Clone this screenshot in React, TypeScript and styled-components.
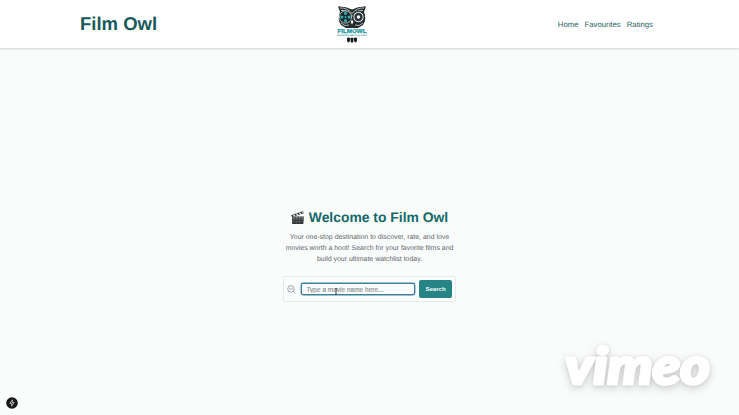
import React from 'react';
import styled, { createGlobalStyle } from 'styled-components';

const GlobalStyle = createGlobalStyle`
  * { box-sizing: border-box; }
  body { margin: 0; background: #fafbfb; font-family: "Liberation Sans", Arial, sans-serif; text-rendering: geometricPrecision; }
`;

const Page = styled.div`
  position: relative;
  display: flex;
  flex-direction: column;
  height: 415px;
  overflow: hidden;
`;

const Header = styled.header`
  display: grid;
  grid-template-columns: 256px 32px 1fr;
  align-items: center;
  flex: none;
  height: 48px;
  padding: 0 86px 0 80px;
  background: #fff;
  box-shadow: 0 1px 2px rgba(0, 0, 0, 0.16);
`;

const Brand = styled.div`
  color: #17595a;
  font-size: 18.5px;
  line-height: 22px;
  font-weight: 700;
  white-space: nowrap;
`;

const OwlLogo = styled.svg`
  display: block;
  width: 32px;
  height: 38px;
`;

const Nav = styled.nav`
  display: flex;
  justify-content: flex-end;
  gap: 6px;
  padding-top: 1px;
`;

const NavLink = styled.a`
  color: #286365;
  font-size: 7.75px;
  line-height: 10px;
  white-space: nowrap;
`;

const Hero = styled.main`
  display: flex;
  flex-direction: column;
  align-items: center;
  padding-top: 160px;
`;

const Title = styled.h1`
  display: flex;
  align-items: center;
  gap: 4px;
  margin: 0;
  padding-right: 1px;
  color: #14696a;
  font-size: 13.9px;
  line-height: 18px;
  font-weight: 700;
  white-space: nowrap;
`;

const Clapper = styled.svg`
  width: 15px;
  height: 15px;
`;

const Intro = styled.p`
  margin: 6px 0 0;
  color: #60686d;
  font-size: 6.94px;
  line-height: 11px;
  text-align: center;
  white-space: nowrap;
`;

const SearchBar = styled.form`
  display: flex;
  align-items: center;
  width: 173px;
  height: 26px;
  margin: 11px 0 0;
  padding: 0 3px;
  border: 1px solid #e7e9ea;
  border-radius: 2px;
  background: #fcfdfd;
`;

const SearchIcon = styled.svg`
  flex: none;
  width: 9px;
  height: 9px;
  margin-right: 5px;
`;

const Field = styled.div`
  position: relative;
  flex: none;
  width: 114px;
  height: 12px;
  margin-right: 4px;
`;

const Input = styled.input`
  display: block;
  width: 100%;
  height: 100%;
  padding: 0 4.5px;
  border: 1.5px solid #3c819f;
  border-radius: 2px;
  outline: none;
  background: #fff;
  box-shadow: 0 0 0 0.4px #3c819f;
  font: 6.5px/9px "Liberation Sans", Arial, sans-serif;
  &::placeholder {
    color: #8f9598;
    opacity: 1;
    -webkit-text-stroke: 0.2px #8f9598;
  }
`;

const TextCursor = styled.svg`
  position: absolute;
  left: 33px;
  top: 5px;
  width: 4px;
  height: 7px;
`;

const SearchButton = styled.button`
  flex: none;
  width: 33px;
  height: 18px;
  padding: 0;
  border: 0;
  border-radius: 2px;
  background: #278485;
  color: #f3ffff;
  font: 700 6.05px/18px "Liberation Sans", Arial, sans-serif;
`;

const DevBadge = styled.svg`
  position: absolute;
  left: 6px;
  top: 397px;
  width: 12px;
  height: 12px;
`;

const Watermark = styled.svg`
  position: absolute;
  left: 550px;
  top: 334px;
  width: 180px;
  height: 78px;
  filter: drop-shadow(0 3px 4px rgba(0, 0, 0, 0.17)) drop-shadow(0 0 1px rgba(0, 0, 0, 0.1));
`;

const Owl = () => (
  <OwlLogo viewBox="0 0 32 38" overflow="visible">
    <path d="M2 1.5 Q9 1 16 4.5 Q23 1 30 1.5 L28 7 Q31 14 27 20 L22 23 H10 L5 20 Q1 14 4 7Z" fill="#222a2b" />
    <path d="M4 3 Q11 2.5 16 8.5 Q21 2.5 28 3 M5 5.5 Q12 4.5 16 11.5 Q20 4.5 27 5.5" fill="none" stroke="#dbe2e2" strokeWidth=".8" />
    <circle cx="9.5" cy="12" r="6.1" fill="#14292b" stroke="#e3eeee" strokeWidth=".7" />
    <circle cx="22.5" cy="12" r="5.6" fill="#eff3f3" stroke="#273032" strokeWidth="1" />
    <circle cx="22.5" cy="12" r="4.2" fill="#293436" />
    <circle cx="22.5" cy="12" r="1.7" fill="#fff" />
    <g fill="#38a9ac">
      <circle cx="9.5" cy="8.4" r="1.6" /><circle cx="9.5" cy="15.6" r="1.6" />
      <circle cx="5.9" cy="12" r="1.6" /><circle cx="13.1" cy="12" r="1.6" />
      <circle cx="9.5" cy="12" r="1" />
    </g>
    <path d="M16 14 L17.8 17 L16 20 L14.2 17Z" fill="#fff" stroke="#202829" strokeWidth=".7" />
    <path d="M5 18 Q9 22 13 20 M27 18 Q23 22 19 20" fill="none" stroke="#d2dbdc" strokeWidth=".8" />
    <text x="1.5" y="28" textLength="29" lengthAdjust="spacingAndGlyphs" fontSize="5.8" fontWeight="700" fill="#20979b" stroke="#20979b" strokeWidth=".25">FILMOWL</text>
    <text x="1" y="31.4" textLength="30" lengthAdjust="spacingAndGlyphs" fontSize="2.1" fontWeight="700" fill="#328c91">DISCOVER, WATCH &amp; HOOT</text>
    <path d="M11 33 Q12.5 32 14 33 V35 Q14 37 12.5 37.5 Q11 37 11 35Z M14.5 33 Q16 32 17.5 33 V35 Q17.5 37.5 16 38 Q14.5 37.5 14.5 35Z M18 33 Q19.5 32 21 33 V35 Q21 37 19.5 37.5 Q18 37 18 35Z" fill="#171d1e" />
  </OwlLogo>
);

const ClapperIcon = () => (
  <Clapper viewBox="0 0 15 15">
    <path d="M1 5.2 L13 1 L13.8 3.2 L2 7Z" fill="#353b3d" />
    <path d="M3 4.8 L5 5.7 M6 3.7 L8 4.7 M9 2.7 L11 3.7 M12 1.7 L13.3 2.4" stroke="#e5e8e8" strokeWidth="1.1" />
    <path d="M2 6.5 H14 L13.3 14 H2.2Z" fill="#343838" />
    <path d="M3 8.6 L4.5 6.9 M6 8.6 L7.5 6.9 M9 8.6 L10.5 6.9 M12 8.6 L13.3 7" stroke="#d7dada" strokeWidth=".9" />
    <path d="M3 9.3 H13 M3 11.4 H12.8 M6.5 11.4 V13.4 M9.5 11.4 V13.4" stroke="#737b7c" strokeWidth=".5" />
  </Clapper>
);

export default function App() {
  return (
    <Page>
      <GlobalStyle />
      <Header>
        <Brand>Film Owl</Brand>
        <Owl />
        <Nav>
          <NavLink>Home</NavLink>
          <NavLink>Favourites</NavLink>
          <NavLink>Ratings</NavLink>
        </Nav>
      </Header>
      <Hero>
        <Title><ClapperIcon />Welcome to Film Owl</Title>
        <Intro>
          Your one-stop destination to discover, rate, and love<br />
          movies worth a hoot! Search for your favorite films and<br />
          build your ultimate watchlist today.
        </Intro>
        <SearchBar>
          <SearchIcon viewBox="0 0 9 9" fill="none" stroke="#7a8990" strokeWidth=".75">
            <circle cx="3.9" cy="3.9" r="3.2" /><path d="M6.2 6.2 L8.5 8.5 M2.3 3.9 H5.5" />
          </SearchIcon>
          <Field>
            <Input placeholder="Type a movie name here..." />
            <TextCursor viewBox="0 0 4 7"><path d="M1 .7 H3 M2 .7 V6.2 M1 6.2 H3" stroke="#333" strokeWidth=".8" /></TextCursor>
          </Field>
          <SearchButton type="button">Search</SearchButton>
        </SearchBar>
      </Hero>
      <DevBadge viewBox="0 0 12 12">
        <circle cx="6" cy="6" r="5.8" fill="#171717" />
        <path d="M6.5 2.8 L3.8 6.4 H5.8 L5.5 9.2 L8.2 5.6 H6.2Z" fill="none" stroke="#eee" strokeWidth=".7" />
      </DevBadge>
      <Watermark viewBox="0 0 180 78">
        <text x="15" y="50" textLength="145" lengthAdjust="spacingAndGlyphs" fontFamily="Lato, sans-serif" fontSize="51" fontWeight="900" fontStyle="italic" fill="#fff" stroke="#fff" strokeWidth="3" strokeLinejoin="round">vimeo</text>
      </Watermark>
    </Page>
  );
}
